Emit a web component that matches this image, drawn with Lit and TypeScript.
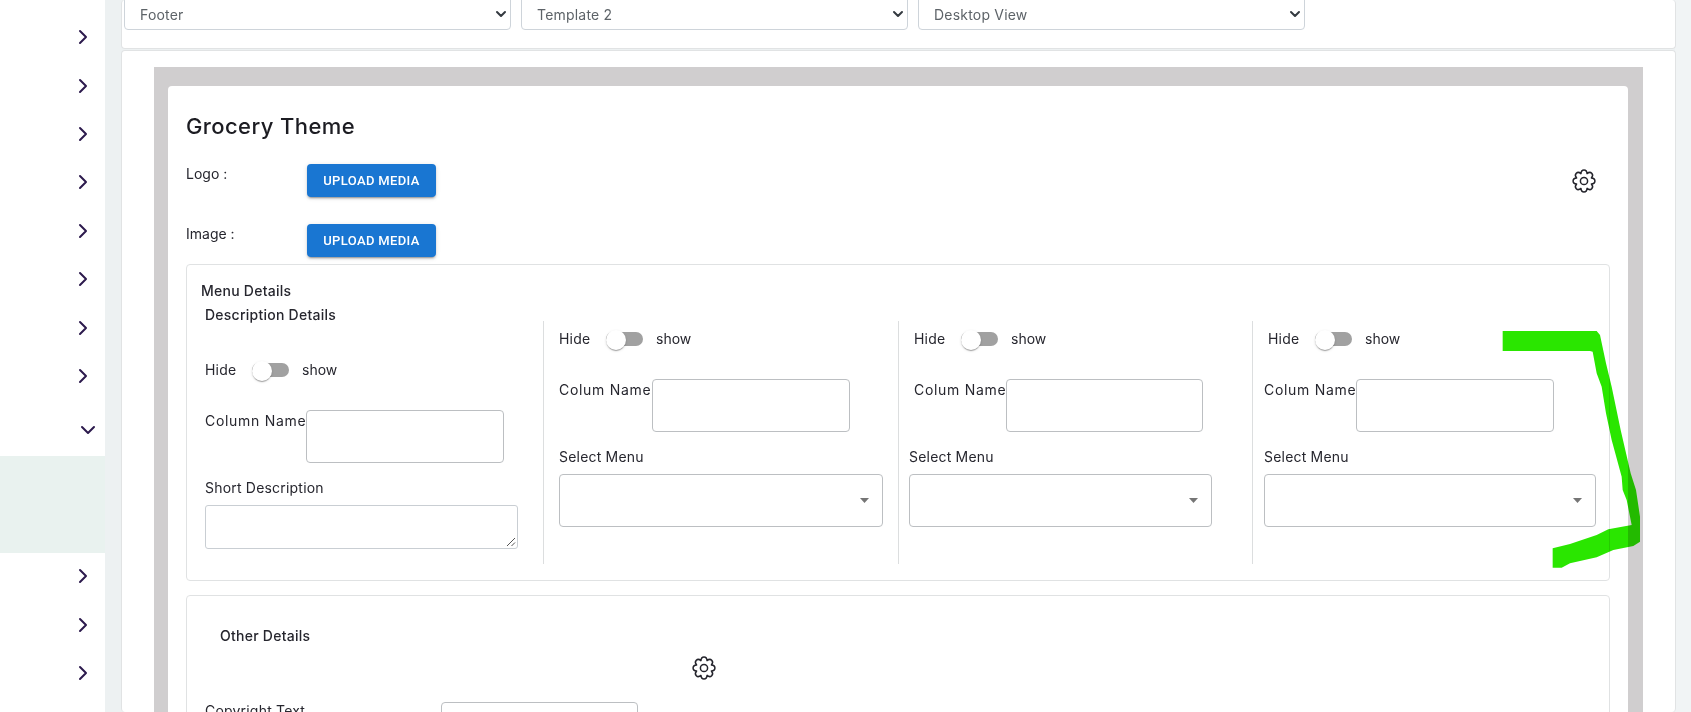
import { LitElement, html, css, svg } from "lit";
import { customElement } from "lit/decorators.js";

const gearPath = (() => {
  const n = 8, cx = 12, cy = 12, ro = 11.2, ri = 8.0;
  let d = "";
  for (let i = 0; i < n; i++) {
    const a = (i / n) * Math.PI * 2 - Math.PI / 2;
    const step = (Math.PI * 2) / n;
    const p = (ang: number, r: number) => `${(cx + Math.cos(ang) * r).toFixed(2)} ${(cy + Math.sin(ang) * r).toFixed(2)}`;
    const start = p(a - step / 2, ri);
    if (i === 0) d += `M${start}`;
    d += `C${p(a - step * 0.28, ro + 1.2)} ${p(a + step * 0.28, ro + 1.2)} ${p(a + step / 2, ri)}`;
  }
  return d + "Z";
})();

const gear = () => html`<svg class="gear" viewBox="0 0 24 24" fill="none" stroke="#23232b" stroke-width="1.5" stroke-linejoin="round">
  ${svg`<path d=${gearPath}></path><circle cx="12" cy="12" r="3.6"></circle>`}
</svg>`;

const chevron = () => html`<svg class="chev" viewBox="0 0 10 16" fill="none" stroke="#2c1a4d" stroke-width="2" stroke-linecap="round" stroke-linejoin="round"><path d="M2 2l6 6-6 6"></path></svg>`;
const chevronDown = () => html`<svg class="chev-d" viewBox="0 0 16 10" fill="none" stroke="#2c1a4d" stroke-width="2" stroke-linecap="round" stroke-linejoin="round"><path d="M2 2l6 6 6-6"></path></svg>`;

@customElement("app-root")
export class AppRoot extends LitElement {
  static styles = css`
    :host {
      display: flex;
      height: 712px;
      overflow: hidden;
      position: relative;
      background: #f1f4f5;
      font-family: Inter, "Noto Sans", sans-serif;
      font-size: 14px;
      letter-spacing: 0.2px;
      line-height: 21px;
      color: #26262e;
    }
    .side {
      width: 105px;
      flex: none;
      background: #fff;
      padding-top: 13px;
      box-sizing: border-box;
    }
    .row {
      height: 48.4px;
      display: flex;
      align-items: center;
      padding-left: 78px;
      box-sizing: border-box;
    }
    .row.open { height: 54px; padding-left: 80px; padding-top: 6px; }
    .active { height: 97px; background: #e9f2ef; margin-bottom: -1px; margin-top: 2px; }
    .chev { width: 10px; height: 16px; }
    .chev-d { width: 16px; height: 10px; }
    .main {
      flex: none;
      width: 1570px;
      padding-left: 16px;
      box-sizing: border-box;
      background: #edf1f2;
      display: flex;
      flex-direction: column;
      gap: 1px;
    }
    .card {
      background: #fff;
      border: 1px solid #e1e3e4;
      border-radius: 4px;
      width: 1555px;
      box-sizing: border-box;
    }
    .top {
      flex: none;
      height: 49px;
      border-top: none;
      padding-left: 2px;
      display: flex;
      gap: 10px;
      overflow: hidden;
    }
    .sel {
      width: 387px;
      height: 38px;
      margin-top: -8px;
      padding: 6px 3px 0 15px;
      box-sizing: border-box;
      border: 1px solid #ced4da;
      border-radius: 4px;
      display: flex;
      align-items: center;
      justify-content: space-between;
      color: #5d6368;
      font-size: 14px;
    }
    .sel svg { width: 12px; height: 8px; }
    .card2 {
      flex: 1;
      min-height: 0;
      overflow: hidden;
      padding: 16px 32px 0 32px;
      border-bottom: none;
    }
    .frame {
      background: #d0cecf;
      padding: 19px 15px 0 14px;
      height: 800px;
      box-sizing: border-box;
    }
    .inner {
      background: #fff;
      border-radius: 4px;
      padding: 23px 18px 0 18px;
      height: 900px;
      box-sizing: border-box;
    }
    h1 {
      margin: 0;
      font-size: 22px;
      line-height: 34px;
      font-weight: 500;
      color: #1c1c22;
      letter-spacing: 0.4px;
    }
    .media {
      display: flex;
      align-items: flex-start;
      height: 33px;
    }
    .m1 { margin-top: 21px; }
    .m2 { margin-top: 27px; }
    .mlabel { width: 121px; flex: none; line-height: 21px; margin-top: -1px; letter-spacing: 0; }
    .upload {
      width: 129px;
      height: 33px;
      padding-bottom: 1px;
      box-sizing: border-box;
      background: #1976d2;
      color: #fff;
      border-radius: 4px;
      font-family: Roboto, sans-serif;
      font-weight: 500;
      font-size: 13px;
      letter-spacing: 0.36px;
      display: flex;
      align-items: center;
      justify-content: center;
      box-shadow: 0 3px 1px -2px rgba(0,0,0,.2), 0 2px 2px rgba(0,0,0,.14), 0 1px 5px rgba(0,0,0,.12);
    }
    .gear { width: 24px; height: 24px; display: block; flex: none; }
    .m1 .gear { margin: 5px 14px 0 auto; }
    .box {
      border: 1px solid #e0e2e3;
      border-radius: 4px;
      box-sizing: border-box;
    }
    .menu { margin-top: 7px; height: 317px; padding-top: 15px; }
    .mtitle { margin-left: 14px; font-weight: 500; font-size: 14px; letter-spacing: 0.25px; line-height: 21px; }
    .grid {
      display: grid;
      grid-template-columns: 356px 355px 354px 1fr;
      margin-top: 3px;
    }
    .col { box-sizing: border-box; }
    .col1 { padding-left: 18px; }
    .ctitle { font-weight: 500; font-size: 14px; letter-spacing: 0.25px; line-height: 21px; }
    .colx { margin-top: 17px; height: 243px; border-left: 1px solid #dcdedf; }
    .toggle-row { display: flex; align-items: center; height: 21px; }
    .col1 .toggle-row { margin-top: 34px; }
    .colx .toggle-row { margin-top: 7px; }
    .t-hide { width: 47px; flex: none; }
    .sw {
      position: relative;
      width: 37px;
      height: 14px;
      border-radius: 7px;
      background: #a1a1a1;
      flex: none;
    }
    .sw::after {
      content: "";
      position: absolute;
      left: 0;
      top: -2px;
      width: 20px;
      height: 20px;
      border-radius: 50%;
      background: #fff;
      box-shadow: 0 2px 1px -1px rgba(0,0,0,.2), 0 1px 1px rgba(0,0,0,.14), 0 1px 3px rgba(0,0,0,.12);
    }
    .t-show { margin-left: 13px; letter-spacing: 0; }
    .name-row { display: flex; align-items: flex-start; }
    .col1 .name-row { margin-top: 30px; }
    .colx .name-row { margin-top: 30px; }
    .nlabel { width: 93px; flex: none; white-space: nowrap; letter-spacing: 0.7px; }
    .col1 .nlabel { width: 101px; }
    .inp {
      width: 198px;
      height: 53px;
      flex: none;
      box-sizing: border-box;
      border: 1px solid #bcbfc2;
      border-radius: 4px;
      background: #fff;
    }
    .slabel { margin-top: 14px; }
    .ta {
      position: relative;
      margin-top: 7px;
      width: 313px;
      height: 44px;
      box-sizing: border-box;
      border: 1px solid #c9ced3;
      border-radius: 3px;
    }
    .ta svg { position: absolute; right: 1px; bottom: 1px; width: 10px; height: 10px; }
    .msel {
      margin-top: 7px;
      height: 53px;
      box-sizing: border-box;
      border: 1px solid #bcbfc2;
      border-radius: 4px;
      display: flex;
      align-items: center;
      justify-content: flex-end;
      padding-right: 13px;
    }
    .msel svg { width: 9px; height: 5px; display: block; }
    .c2 { padding-left: 15px; }
    .c2 .msel { width: 324px; }
    .c3 { padding-left: 10px; }
    .c3 .toggle-row, .c3 .name-row { padding-left: 5px; }
    .c3 .msel { width: 303px; }
    .c3 .inp { width: 197px; margin-left: -1px; }
    .c4 { padding-left: 11px; }
    .c4 .toggle-row { padding-left: 4px; }
    .c4 .inp { margin-left: -1px; }
    .c4 .msel { width: 332px; }
    .other { margin-top: 14px; height: 200px; position: relative; padding-left: 18px; }
    .otitle { padding: 29px 0 0 15px; font-weight: 500; font-size: 14px; letter-spacing: 0.25px; line-height: 21px; }
    .other .gear { margin: 10px 0 0 487px; }
    .copy { display: flex; margin-top: 22px; }
    .copy span { width: 236px; flex: none; margin-top: -2px; }
    .copy .inp { width: 197px; }
    .scribble {
      position: absolute;
      left: 1200px;
      top: 300px;
      width: 491px;
      height: 300px;
      mix-blend-mode: multiply;
      pointer-events: none;
    }
  `;

  private col(cls: string) {
    return html`<div class="col colx ${cls}">
      <div class="toggle-row"><span class="t-hide">Hide</span><span class="sw"></span><span class="t-show">show</span></div>
      <div class="name-row"><span class="nlabel">Colum Name</span><div class="inp"></div></div>
      <div class="slabel">Select Menu</div>
      <div class="msel"><svg viewBox="0 0 9 5"><path d="M0 0h9L4.5 5z" fill="#757575"></path></svg></div>
    </div>`;
  }

  render() {
    const selArrow = html`<svg viewBox="0 0 12 8" fill="none" stroke="#343a40" stroke-width="2" stroke-linecap="round" stroke-linejoin="round"><path d="M2 2l4 4 4-4"></path></svg>`;
    return html`
      <div class="side">
        ${[0, 1, 2, 3, 4, 5, 6, 7].map(() => html`<div class="row">${chevron()}</div>`)}
        <div class="row open">${chevronDown()}</div>
        <div class="active"></div>
        ${[0, 1, 2].map(() => html`<div class="row">${chevron()}</div>`)}
      </div>
      <div class="main">
        <div class="card top">
          <div class="sel"><span>Footer</span>${selArrow}</div>
          <div class="sel"><span>Template 2</span>${selArrow}</div>
          <div class="sel"><span>Desktop View</span>${selArrow}</div>
        </div>
        <div class="card card2">
          <div class="frame">
            <div class="inner">
              <h1>Grocery Theme</h1>
              <div class="media m1"><span class="mlabel">Logo :</span><div class="upload">UPLOAD MEDIA</div>${gear()}</div>
              <div class="media m2"><span class="mlabel">Image :</span><div class="upload">UPLOAD MEDIA</div></div>
              <div class="box menu">
                <div class="mtitle">Menu Details</div>
                <div class="grid">
                  <div class="col col1">
                    <div class="ctitle">Description Details</div>
                    <div class="toggle-row"><span class="t-hide">Hide</span><span class="sw"></span><span class="t-show">show</span></div>
                    <div class="name-row"><span class="nlabel">Column Name</span><div class="inp"></div></div>
                    <div class="slabel">Short Description</div>
                    <div class="ta"><svg viewBox="0 0 10 10" stroke="#555" stroke-width="1"><path d="M1 9l8-8M5.5 9l3.5-3.5"></path></svg></div>
                  </div>
                  ${this.col("c2")}${this.col("c3")}${this.col("c4")}
                </div>
              </div>
              <div class="box other">
                <div class="otitle">Other Details</div>
                ${gear()}
                <div class="copy"><span>Copyright Text</span><div class="inp"></div></div>
              </div>
            </div>
          </div>
        </div>
      </div>
      <svg class="scribble" viewBox="0 0 1473 900"><polygon fill="#2ae600" points="908,93 1190,93 1200,105 1218,190 1235,260 1262,390 1292,520 1308,570 1320,650 1320,725 1300,738 1240,750 1190,772 1110,790 1085,803 1058,803 1058,745 1110,732 1190,705 1225,688 1295,675 1280,600 1268,570 1265,530 1235,420 1218,340 1205,260 1190,220 1178,155 1170,153 908,153"></polygon></svg>
    `;
  }
}
